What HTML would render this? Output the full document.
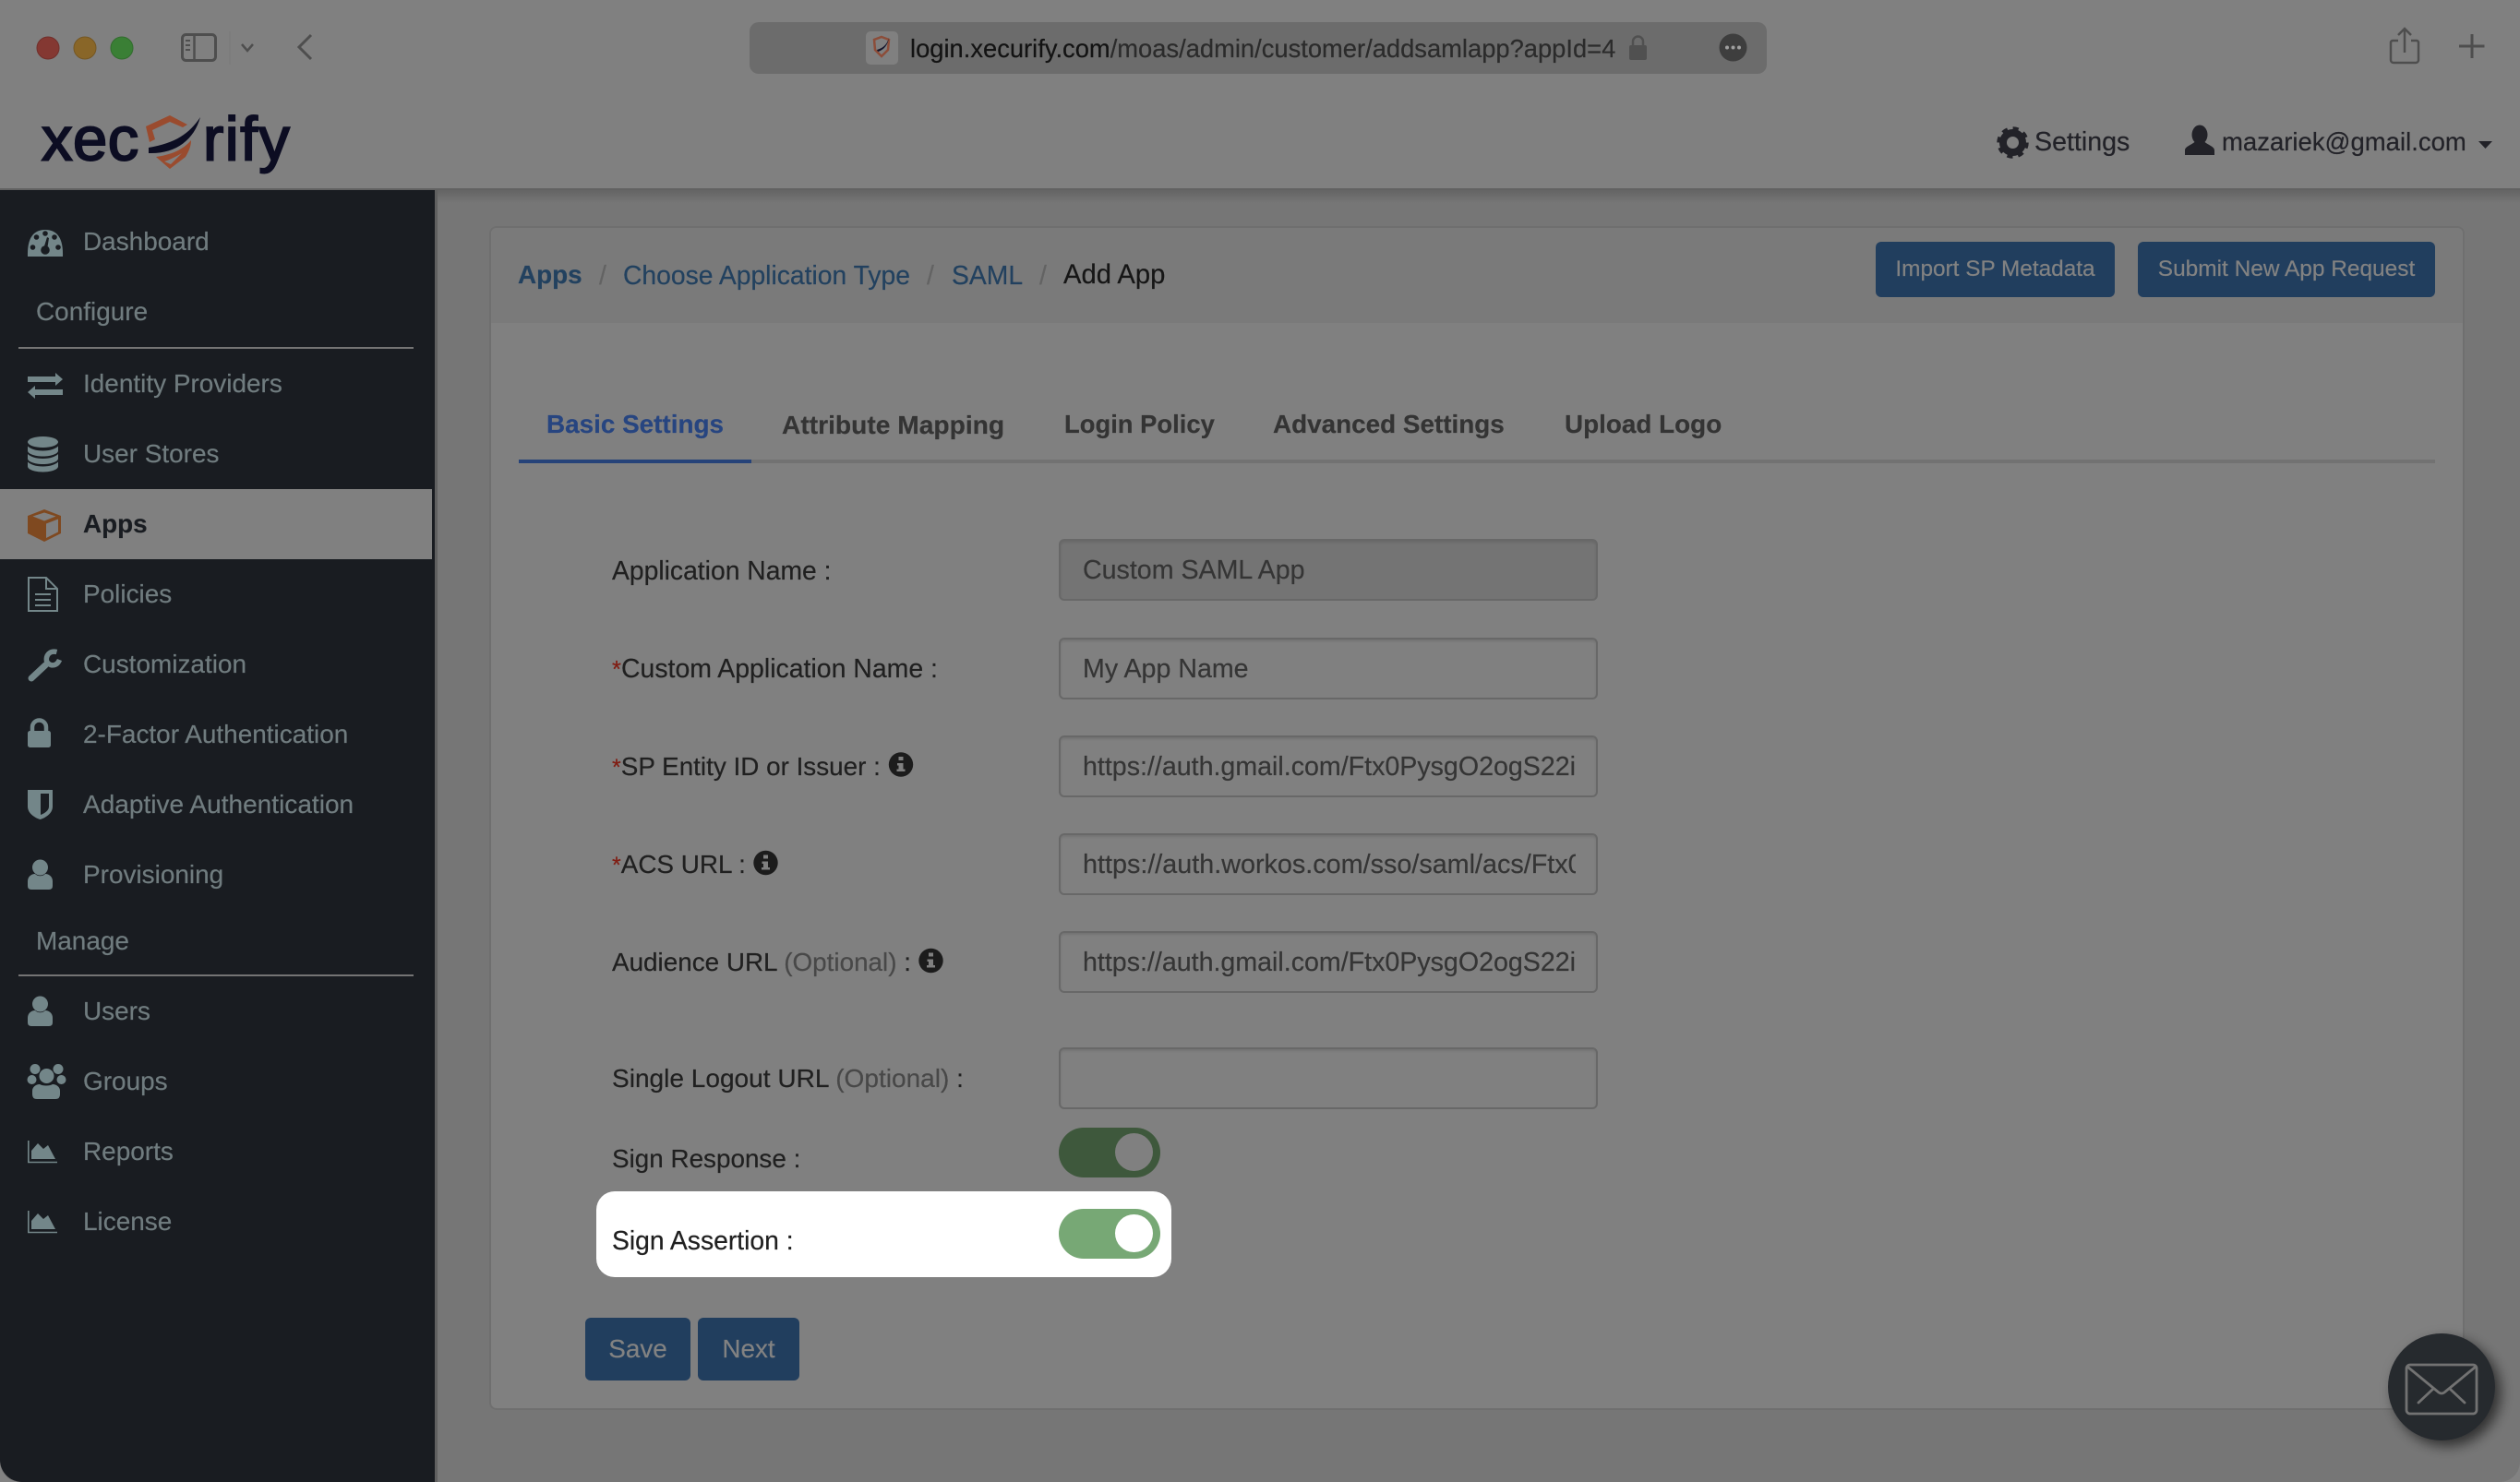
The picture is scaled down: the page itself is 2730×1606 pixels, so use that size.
<!DOCTYPE html>
<html lang="en">
<head>
<meta charset="utf-8">
<title>Add App - Xecurify</title>
<style>
html,body{margin:0;padding:0;background:#828282;}
#win{position:relative;width:2730px;height:1606px;overflow:hidden;background:#767676;font-family:"Liberation Sans",Arial,sans-serif;border-radius:0 0 22px 22px;-webkit-text-stroke:.2px currentColor;}
#win div,#win span.t,#win label{position:absolute;}
.t{white-space:nowrap;line-height:40px;font-size:28.3px;color:#202020;position:absolute;}
.n{color:#707c7f;left:90px;font-size:27.95px;}
.input{left:1147px;width:584px;height:67px;border:2px solid #686868;border-radius:6px;box-shadow:inset 0 2px 2px rgba(0,0,0,.1);box-sizing:border-box;background:#808080;overflow:hidden;}
.input span{position:absolute;left:24px;top:12px;line-height:40px;font-size:28.6px;color:#353535;white-space:nowrap;width:534px;overflow:hidden;display:block;}
.btn{background:#213e5e;border-radius:6px;color:#828282;text-align:center;}
.bc{color:#22415f;}
.sep{color:#636363;}
.tab{font-weight:bold;color:#343434;font-size:27.86px;}
.opt{color:#484848;}
.req{color:#801c12;font-size:.9em;}
svg{position:absolute;left:0;top:0;}
</style>
</head>
<body>
<div id="win">
  <!-- browser chrome + top nav -->
  <div style="left:0;top:0;width:2730px;height:204px;background:#808080;"></div>
  <div style="left:0;top:204px;width:2730px;height:2px;background:#626262;"></div>
  <div style="left:0;top:206px;width:2730px;height:14px;background:linear-gradient(#646464,#767676);"></div>
  <div style="left:812px;top:24px;width:1102px;height:56px;background:#6c6c6c;border-radius:10px;"></div>
  <div style="left:938px;top:34px;width:35px;height:36px;background:#808080;border-radius:5px;"></div>
  <span class="t" style="left:986px;top:33px;font-size:27.33px;color:#2b2b2b;"><span style="color:#131313;">login.xecurify.com</span>/moas/admin/customer/addsamlapp?appId=4</span>
  <span class="t" style="left:2204px;top:134px;color:#222228;font-size:28.6px;">Settings</span>
  <span class="t" style="left:2407px;top:134px;color:#222228;font-size:27.5px;">mazariek@gmail.com</span>

  <!-- sidebar -->
  <div style="left:0;top:206px;width:474px;height:1400px;background:#606060;border-radius:0 0 0 24px;"></div>
  <div style="left:0;top:206px;width:471px;height:1400px;background:#191c21;border-radius:0 0 0 24px;"></div>
  <div style="left:0;top:530px;width:468px;height:76px;background:#808080;"></div>
  <div style="left:20px;top:376px;width:428px;height:2px;background:#747474;"></div>
  <div style="left:20px;top:1056px;width:428px;height:2px;background:#747474;"></div>
  <span class="t n" style="top:242px;">Dashboard</span>
  <span class="t n" style="left:39px;top:318px;">Configure</span>
  <span class="t n" style="top:396px;">Identity Providers</span>
  <span class="t n" style="top:472px;">User Stores</span>
  <span class="t" style="left:90px;top:548px;font-weight:bold;color:#191c21;font-size:27.86px;">Apps</span>
  <span class="t n" style="top:624px;">Policies</span>
  <span class="t n" style="top:700px;">Customization</span>
  <span class="t n" style="top:776px;">2-Factor Authentication</span>
  <span class="t n" style="top:852px;font-size:28.05px;">Adaptive Authentication</span>
  <span class="t n" style="top:928px;">Provisioning</span>
  <span class="t n" style="left:39px;top:1000px;">Manage</span>
  <span class="t n" style="top:1076px;">Users</span>
  <span class="t n" style="top:1152px;">Groups</span>
  <span class="t n" style="top:1228px;">Reports</span>
  <span class="t n" style="top:1304px;">License</span>

  <!-- panel -->
  <div style="left:530px;top:245px;width:2140px;height:1283px;background:#808080;border:2px solid #6f6f6f;border-radius:8px;box-sizing:border-box;"></div>
  <div style="left:532px;top:247px;width:2136px;height:103px;background:#7a7a7a;border-radius:6px 6px 0 0;"></div>
  <span class="t bc" style="left:561px;top:278px;font-weight:bold;font-size:27.86px;">Apps</span>
  <span class="t sep" style="left:649px;top:278px;">/</span>
  <span class="t bc" style="left:675px;top:278px;">Choose Application Type</span>
  <span class="t sep" style="left:1004px;top:278px;">/</span>
  <span class="t bc" style="left:1031px;top:278px;">SAML</span>
  <span class="t sep" style="left:1126px;top:278px;">/</span>
  <span class="t" style="left:1152px;top:278px;color:#161616;font-size:29.2px;">Add App</span>
  <div class="btn" style="left:2032px;top:262px;width:259px;height:60px;line-height:60px;font-size:24.37px;">Import SP Metadata</div>
  <div class="btn" style="left:2316px;top:262px;width:322px;height:60px;line-height:60px;font-size:24.45px;">Submit New App Request</div>

  <!-- tabs -->
  <div style="left:562px;top:498px;width:2076px;height:4px;background:#727272;"></div>
  <div style="left:562px;top:498px;width:252px;height:4px;background:#264379;"></div>
  <span class="t tab" style="left:592px;top:440px;color:#274580;">Basic Settings</span>
  <span class="t tab" style="left:847px;top:440px;font-size:28.2px;">Attribute Mapping</span>
  <span class="t tab" style="left:1153px;top:440px;font-size:27.4px;">Login Policy</span>
  <span class="t tab" style="left:1379px;top:440px;">Advanced Settings</span>
  <span class="t tab" style="left:1695px;top:440px;">Upload Logo</span>

  <!-- form -->
  <span class="t" style="left:663px;top:597.500px;">Application Name :</span>
  <span class="t" style="left:663px;top:705px;font-size:28.45px;"><span class="req">*</span>Custom Application Name :</span>
  <span class="t" style="left:663px;top:811px;font-size:27.85px;"><span class="req">*</span>SP Entity ID or Issuer :</span>
  <span class="t" style="left:663px;top:917px;font-size:27.85px;"><span class="req">*</span>ACS URL :</span>
  <span class="t" style="left:663px;top:1023px;font-size:27.85px;">Audience URL <span class="opt">(Optional)</span> :</span>
  <span class="t" style="left:663px;top:1149px;font-size:28.05px;">Single Logout URL <span class="opt">(Optional)</span> :</span>
  <span class="t" style="left:663px;top:1236px;font-size:27.85px;">Sign Response :</span>

  <div class="input" style="top:584px;background:#747474;"><span>Custom SAML App</span></div>
  <div class="input" style="top:691px;"><span>My App Name</span></div>
  <div class="input" style="top:797px;"><span>https://auth.gmail.com/Ftx0PysgO2ogS22i</span></div>
  <div class="input" style="top:903px;"><span style="font-size:28.75px;">https://auth.workos.com/sso/saml/acs/Ftx0PysgO2ogS22i</span></div>
  <div class="input" style="top:1009px;"><span>https://auth.gmail.com/Ftx0PysgO2ogS22i</span></div>
  <div class="input" style="top:1135px;"><span></span></div>

  <div style="left:1147px;top:1222px;width:110px;height:54px;background:#3e583c;border-radius:27px;"></div>
  <div style="left:1208px;top:1228px;width:41px;height:41px;background:#808080;border-radius:50%;"></div>

  <div style="left:646px;top:1291px;width:623px;height:93px;background:#fff;border-radius:20px;"></div>
  <span class="t" style="left:663px;top:1323.500px;">Sign Assertion :</span>
  <div style="left:1147px;top:1310px;width:110px;height:54px;background:#77a875;border-radius:27px;"></div>
  <div style="left:1208px;top:1316px;width:41px;height:41px;background:#fff;border-radius:50%;"></div>

  <div class="btn" style="left:634px;top:1428px;width:114px;height:68px;line-height:67px;font-size:27.86px;">Save</div>
  <div class="btn" style="left:756px;top:1428px;width:110px;height:68px;line-height:67px;font-size:27.86px;">Next</div>

  <!-- icons -->
  <svg width="2730" height="1606" viewBox="0 0 2730 1606" xmlns="http://www.w3.org/2000/svg">
    <!-- traffic lights -->
    <circle cx="52" cy="52" r="12" fill="#843832" stroke="#702f2b" stroke-width="1"/>
    <circle cx="92" cy="52" r="12" fill="#896628" stroke="#745724" stroke-width="1"/>
    <circle cx="132" cy="52" r="12" fill="#3a7f35" stroke="#326c2e" stroke-width="1"/>
    <!-- sidebar toggle -->
    <rect x="197.5" y="37.5" width="36" height="28" rx="4" fill="none" stroke="#4e4e4e" stroke-width="3"/>
    <path d="M210.5 37v28" stroke="#4e4e4e" stroke-width="2.5"/>
    <path d="M201 44h5M201 49h5M201 54h5" stroke="#4e4e4e" stroke-width="2"/>
    <path d="M249 34v36" stroke="#797979" stroke-width="1"/>
    <path d="M262 48l6 7 6-7" fill="none" stroke="#4e4e4e" stroke-width="2.5"/>
    <path d="M337 38l-13 13 13 13" fill="none" stroke="#4e4e4e" stroke-width="3"/>
    <!-- favicon -->
    <path d="M955 40l8 3-1 11-7 7-7-7-1-11z" fill="none" stroke="#8c4d39" stroke-width="2.5"/>
    <path d="M963 41c-2 7-6 11-13 13l1 2c7-2 11-8 12-15z" fill="#14142a"/>
    <!-- url lock -->
    <rect x="1765" y="49" width="19" height="16" rx="2" fill="#505050"/>
    <path d="M1769 49v-4a5.500 5.500 0 0 1 11 0v4" fill="none" stroke="#505050" stroke-width="2.500"/>
    <!-- url dots -->
    <circle cx="1877.500" cy="51.500" r="15" fill="#3e3e3e"/>
    <circle cx="1871" cy="51.500" r="2" fill="#a0a0a0"/><circle cx="1877.500" cy="51.500" r="2" fill="#a0a0a0"/><circle cx="1884" cy="51.500" r="2" fill="#a0a0a0"/>
    <!-- share / plus -->
    <path d="M2598 44h-6a2 2 0 0 0-2 2v19a3 3 0 0 0 3 3h24a3 3 0 0 0 3-3V46a2 2 0 0 0-2-2h-6" fill="none" stroke="#4e4e4e" stroke-width="2.500"/>
    <path d="M2605 57V32M2598 38l7-7 7 7" fill="none" stroke="#4e4e4e" stroke-width="2.500"/>
    <path d="M2678 37v26M2664 50h27.500" stroke="#4e4e4e" stroke-width="3"/>
    <!-- logo -->
    <text x="45" y="173.500" font-family="Liberation Sans, Arial, sans-serif" font-size="67" fill="#0c0d22" stroke="#0c0d22" stroke-width="2" style="letter-spacing:.5px">xec</text>
    <text x="220" y="173.500" font-family="Liberation Sans, Arial, sans-serif" font-size="67" fill="#0c0d22" stroke="#0c0d22" stroke-width="2" style="letter-spacing:1.500px">rify</text>
    <path d="M158 137l26-12 19 10-5 3-14-6-19 9 3 10-6 3z" fill="#9a4b2e"/>
    <path d="M169 170l15 13 17-13c4-7 6-12 6-18-7 8-17 15-38 18z" fill="#9a4b2e"/>
    <path d="M178 175l7 3 12-12c-7 4-13 7-19 9z" fill="#808080"/>
    <path d="M217 127c-12 18-27 28-56 33v6c29 1 49-14 56-39z" fill="#0c0d22"/>
    <!-- gear -->
    <g fill="none" stroke="#222228">
      <circle cx="2180.500" cy="154.500" r="10.500" stroke-width="8"/>
      <circle cx="2180.500" cy="154.500" r="15" stroke-width="4.500" stroke-dasharray="6 5.780"/>
    </g>
    <!-- person -->
    <ellipse cx="2383" cy="146" rx="8.500" ry="10.500" fill="#222228"/>
    <path d="M2367 168v-5c0-5 9-6 12-11h8c3 5 12 6 12 11v5z" fill="#222228"/>
    <path d="M2685 153h15l-7.500 8z" fill="#222228"/>
    <!-- nav icons -->
    <g fill="#738689">
      <path d="M30 278q-1-29 19-29t19 29z"/>
      <g fill="#191c21">
        <circle cx="35.500" cy="268" r="2.800"/><circle cx="39.500" cy="257" r="2.800"/><circle cx="49" cy="253" r="2.800"/><circle cx="59" cy="257" r="2.800"/><circle cx="63" cy="268" r="2.800"/>
        <circle cx="49" cy="271" r="4.800"/><path d="M47 270l4-13 2 1-2 13z"/>
      </g>
      <path d="M30 408h30v-4l8 7-8 7v-4H30z"/>
      <path d="M68 422H38v-4l-8 7 8 7v-4h30z"/>
      <ellipse cx="46.500" cy="479" rx="16.500" ry="6"/>
      <path d="M30 483.500v5c0 3 7 6 16.500 6s16.500-3 16.500-6v-5c-3 3-9 5-16.500 5s-13.500-2-16.500-5z"/>
      <path d="M30 492v5c0 3 7 6 16.500 6s16.500-3 16.500-6v-5c-3 3-9 5-16.500 5s-13.500-2-16.500-5z"/>
      <path d="M30 500.500v5c0 3 7 6 16.500 6s16.500-3 16.500-6v-5c-3 3-9 5-16.500 5s-13.500-2-16.500-5z"/>
      <rect x="30" y="792" width="25" height="18" rx="2.500"/>
      <path d="M30 856h27v18c0 7-7 12-13.500 14-6.500-2-13.500-7-13.500-14z"/>
      <path d="M44 860h9v14c0 4-4 7-9 9z" fill="#191c21"/>
      <g>
        <circle cx="43.500" cy="940" r="8.500"/>
        <path d="M30 960v-5c0-5 4-8 8-8 3 3 8 3 11 0 4 0 8 3 8 8v5q0 4-4 4H34q-4 0-4-4z"/>
      </g>
      <g transform="translate(0,148)">
        <circle cx="43.500" cy="940" r="8.500"/>
        <path d="M30 960v-5c0-5 4-8 8-8 3 3 8 3 11 0 4 0 8 3 8 8v5q0 4-4 4H34q-4 0-4-4z"/>
      </g>
      <!-- groups -->
      <circle cx="38" cy="1158.500" r="5.500"/><circle cx="63" cy="1158.500" r="5.500"/>
      <circle cx="34.500" cy="1170" r="5"/><circle cx="66.500" cy="1170" r="5"/>
      <circle cx="50.500" cy="1166" r="8"/>
      <path d="M35 1186v-4c0-4 4-7 8-7 3 2 11 2 14 0 4 0 8 3 8 7v4q0 5-5 5H40q-5 0-5-5z"/>
      <path d="M34 1256v-9l7-8 6 6 5-4 8 15z"/>
      <path d="M34 1332v-9l7-8 6 6 5-4 8 15z"/>
    </g>
    <g fill="none" stroke="#738689">
      <path d="M30.800 1236v23.500H62" stroke-width="1.600"/>
      <path d="M30.800 1312v23.500H62" stroke-width="1.600"/>
      <path d="M31 626h19l12 12v24H31zM50 626v12h12" stroke-width="2"/>
      <path d="M38 644h17M38 650h17M38 656h17" stroke-width="2"/>
      <path d="M35 793v-5a7.500 7.500 0 0 1 15 0v5" stroke-width="4.500"/>
      <path d="M34 735l15-14" stroke-width="7" stroke-linecap="round"/>
      <path d="M61.500 706.500c-8-2-12 4-11 10 3 6 11 6 14-1.500" stroke-width="5.500"/>
    </g>
    <path d="M30 559l18-7 18 7v19l-18 9-18-9z" fill="#7f4920"/>
    <path d="M48 555.500l12.500 4-12.500 5-12.500-5z" fill="#808080"/>
    <path d="M50 567.500l13-5v14l-13 6.500z" fill="#808080"/>
    <!-- info icons -->
    <g>
      <circle cx="976" cy="828.500" r="13.200" fill="#1c1c1c"/>
      <circle cx="829.500" cy="935" r="13.200" fill="#1c1c1c"/>
      <circle cx="1008.500" cy="1041" r="13.200" fill="#1c1c1c"/>
      <path d="M973.500 820h5v4h-5zM972 827h6.500v6.500h2v2.500h-9v-2.500h2v-4h-1.500z" fill="#808080"/>
      <path d="M827 926.500h5v4h-5zM825.500 933.500h6.500v6.500h2v2.500h-9V940h2v-4h-1.500z" fill="#808080"/>
      <path d="M1006 1032.500h5v4h-5zM1004.500 1039.500h6.500v6.500h2v2.500h-9V1046h2v-4h-1.500z" fill="#808080"/>
    </g>
    <!-- mail -->
    <defs><filter id="s" x="-30%" y="-30%" width="170%" height="170%"><feDropShadow dx="6" dy="6" stdDeviation="7" flood-color="#000" flood-opacity=".6"/></filter></defs>
    <circle cx="2645" cy="1503" r="58" fill="#272a2f" filter="url(#s)"/>
    <rect x="2607" y="1479" width="76" height="53" rx="4" fill="none" stroke="#727272" stroke-width="2.800"/>
    <path d="M2608 1481l34 28q3 2 6 0l34-28M2620 1520l16-15M2670 1520l-16-15" fill="none" stroke="#727272" stroke-width="2.800" stroke-linecap="round"/>
  </svg>
</div>
</body>
</html>
